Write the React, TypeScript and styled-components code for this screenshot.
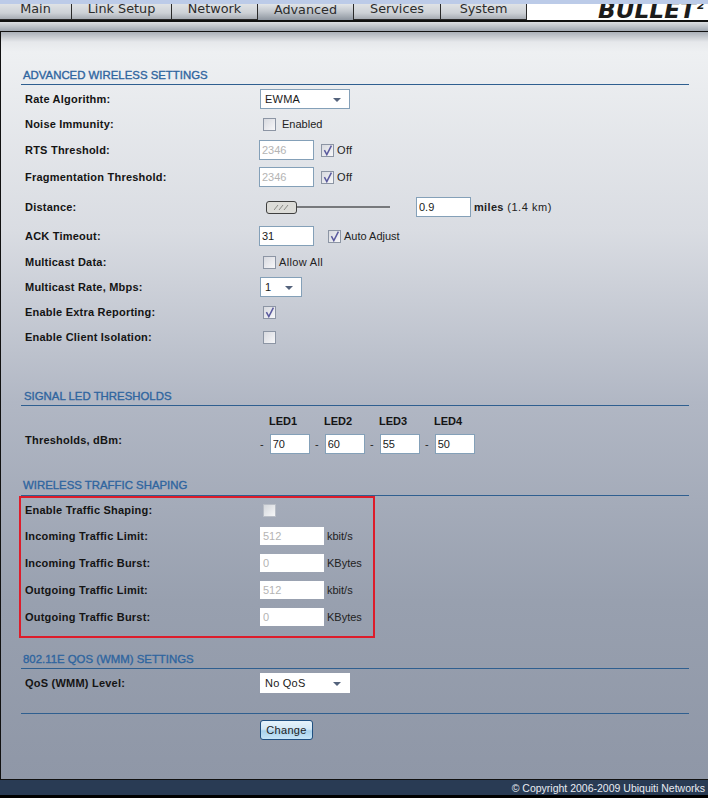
import React from "react";
import styled, { createGlobalStyle } from "styled-components";

const Global = createGlobalStyle`
  html, body { margin: 0; padding: 0; background: #000; }
  * { box-sizing: border-box; }
  body { font-family: "Liberation Sans", Arial, sans-serif; }
`;

const Page = styled.div`
  width: 708px;
  height: 798px;
  display: flex;
  flex-direction: column;
  overflow: hidden;
  background: #000;
`;
const TopStrip = styled.div`
  height: 4px;
  background: #bccbe8;
  flex: none;
`;
const TabBar = styled.div`
  height: 18px;
  flex: none;
  display: flex;
  background: #fff;
  border-bottom: 2px solid #111;
  overflow: hidden;
`;
const Tab = styled.div<{ $w: number; $active?: boolean }>`
  width: ${(p) => p.$w}px;
  height: 16px;
  flex: none;
  display: flex;
  justify-content: center;
  align-items: center;
  font-family: "DejaVu Sans", Verdana, sans-serif;
  font-size: 12.8px;
  line-height: 9px;
  padding-bottom: 6px;
  color: #2c2c2c;
  border-right: 1px solid #2a2a2a;
  border-bottom: ${(p) => (p.$active ? "none" : "1px solid #2a2a2a")};
  background: ${(p) =>
    p.$active
      ? "linear-gradient(#e2e5e8 0%, #c4c9cf 45%, #8e96a0 100%)"
      : "linear-gradient(#dfe2e5 0%, #cdd1d6 60%, #a7acb3 100%)"};
`;
const LogoArea = styled.div`
  flex: 1;
  position: relative;
  overflow: hidden;
`;
const LogoText = styled.span`
  position: absolute;
  left: 71px;
  top: -7px;
  font-family: "DejaVu Sans", sans-serif;
  font-weight: 700;
  font-style: italic;
  font-size: 23px;
  line-height: 26px;
  color: #1c1c1c;
  transform: scaleX(1.01);
  transform-origin: left top;
  white-space: nowrap;
  sup { font-size: 11px; line-height: 0; vertical-align: 9px; margin-left: 1px; }
`;
const Band = styled.div`
  height: 10px;
  flex: none;
  background: linear-gradient(#dde0e3, #9fa6b0);
  border-bottom: 1px solid #111;
`;
const Main = styled.main`
  height: 747px;
  flex: none;
  border-left: 1px solid #111;
  padding: 0 19px 0 20px;
  background: linear-gradient(
    #aab0b8 0px,
    #e6e8eb 10px,
    #eef0f2 20px,
    #d9dce2 200px,
    #b1b7c4 370px,
    #98a0af 570px,
    #8f97a7 747px
  );
`;
const Section = styled.section<{ $top: number }>`
  padding-top: ${(p) => p.$top}px;
`;
const Heading = styled.h2<{ $indent?: number; $h?: number }>`
  margin: 0;
  height: ${(p) => p.$h ?? 16}px;
  padding-left: ${(p) => p.$indent ?? 2}px;
  font-size: 11.4px;
  line-height: 14px;
  font-weight: 400;
  -webkit-text-stroke: 0.35px #2f659f;
  color: #2f659f;
`;
const Rule = styled.hr`
  margin: 0;
  border: 0;
  height: 1px;
  background: #2f5f90;
`;
const Row = styled.div<{ $h: number }>`
  height: ${(p) => p.$h}px;
  display: grid;
  grid-template-columns: 235px 1fr;
  align-items: center;
  padding-left: 4px;
`;
const Label = styled.label`
  font-size: 11px;
  font-weight: 700;
  color: #141414;
  letter-spacing: 0.02em;
`;
const LedLabel = styled(Label)`
  padding-bottom: 2px;
`;
const Controls = styled.div<{ $gap?: number; $left?: number }>`
  display: flex;
  align-items: center;
  gap: ${(p) => p.$gap ?? 7}px;
  margin-left: ${(p) => p.$left ?? 0}px;
`;
const Field = styled.input<{ $w: number; $h?: number; $plain?: boolean }>`
  width: ${(p) => p.$w}px;
  height: ${(p) => p.$h ?? 20}px;
  padding: 0 2px;
  margin: 0;
  border: 1px solid ${(p) => (p.$plain ? "#fff" : "#84a0b8")};
  border-radius: 0;
  outline: none;
  background: #fff;
  font: 11px "Liberation Sans", Arial, sans-serif;
  color: ${(p) => (p.disabled ? "#b4b4b4" : "#1a1a1a")};
  &:disabled { background: #fff; }
`;
const Select = styled.div<{ $w: number; $bare?: boolean }>`
  width: ${(p) => p.$w}px;
  height: 20px;
  padding: 0 8px 0 4px;
  display: flex;
  align-items: center;
  justify-content: space-between;
  background: #fff;
  border: 1px solid ${(p) => (p.$bare ? "#fff" : "#84a0b8")};
  font-size: 11px;
  color: #1a1a1a;
  letter-spacing: 0.02em;
`;
const Caret = styled.span`
  width: 0;
  height: 0;
  margin-top: 2px;
  border-left: 4px solid transparent;
  border-right: 4px solid transparent;
  border-top: 4px solid #54637c;
`;
const Box = styled.span<{ $faded?: boolean }>`
  width: 13px;
  height: 13px;
  flex: none;
  display: inline-block;
  border: 1px solid ${(p) => (p.$faded ? "#b9bec7" : "#8c95a4")};
  background: ${(p) =>
    p.$faded
      ? "linear-gradient(135deg,#d4d7dc,#f6f7f8)"
      : "linear-gradient(135deg,#d8dae0,#f7f7f9)"};
  svg { display: block; overflow: visible; }
`;
const OptionText = styled.span<{ $bold?: boolean; $wide?: boolean }>`
  font-size: 11px;
  color: #222;
  letter-spacing: ${(p) => (p.$wide ? "0.03em" : "0")};
  font-weight: ${(p) => (p.$bold ? 700 : 400)};
`;
const Muted = styled.span`
  font-weight: 400;
  letter-spacing: 0.05em;
`;
const Check = ({ on, faded }: { on?: boolean; faded?: boolean }) => (
  <Box $faded={faded}>
    {on && (
      <svg width="11" height="11" viewBox="0 0 11 11" aria-hidden="true">
        <path d="M2.4 5.2 L4.8 9.6 L9.4 0.6" fill="none" stroke="#5a5a9e" strokeWidth="1.5" />
      </svg>
    )}
  </Box>
);
const SliderWrap = styled.div`
  width: 124px;
  display: flex;
  align-items: center;
`;
const Thumb = styled.div`
  width: 31px;
  height: 13px;
  flex: none;
  border: 1px solid #3f3f3f;
  border-radius: 3px;
  background: #dcdcd8;
  display: flex;
  align-items: center;
  justify-content: center;
`;
const Track = styled.div`
  flex: 1;
  height: 3px;
  background: #77797c;
  border-bottom: 1px solid #dfe1e4;
`;
const LedGrid = styled.div`
  padding-left: 4px;
  display: grid;
  grid-template-columns: 235px repeat(4, 55px);
  grid-template-rows: 21px 28px;
  align-items: center;
`;
const LedHead = styled.div`
  font-size: 11px;
  font-weight: 700;
  color: #141414;
  padding: 8px 0 0 9px;
`;
const LedCell = styled.div`
  display: flex;
  align-items: center;
  gap: 6px;
  font-size: 11px;
  color: #222;
  padding-top: 6px;
`;
const RedBox = styled.div`
  width: 356px;
  height: 142px;
  margin-left: -2px;
  border: 2px solid #dd1c2a;
`;
const ChangeRow = styled.div`
  padding: 6px 0 0 239px;
`;
const ChangeButton = styled.button`
  width: 53px;
  height: 20px;
  padding: 0;
  border: 1px solid #1f4f80;
  border-radius: 3px;
  background: linear-gradient(#e6f2fa 0%, #d3e8f6 45%, #a9d2ec 55%, #c5e4f7 100%);
  font: 11px "Liberation Sans", Arial, sans-serif;
  letter-spacing: 0.03em;
  color: #1c1c1c;
`;
const Footer = styled.footer`
  height: 16px;
  flex: none;
  background: #293b54;
  border-top: 1px solid #111;
  display: flex;
  justify-content: flex-end;
  align-items: center;
  padding-right: 3px;
  font-size: 10.5px;
  color: #e8ecf2;
`;

const ThresholdOff = () => (
  <Controls $left={-1}>
    <Field $w={55} value="2346" disabled readOnly />
    <Controls $gap={3}>
      <Check on />
      <OptionText $wide>Off</OptionText>
    </Controls>
  </Controls>
);

const TrafficField = ({ value, unit }: { value: string; unit: string }) => (
  <Controls $gap={3}>
    <Field $w={64} $h={18} $plain value={value} disabled readOnly />
    <OptionText>{unit}</OptionText>
  </Controls>
);

export default function App() {
  return (
    <Page>
      <Global />
      <TopStrip />
      <TabBar>
        <Tab $w={72}>Main</Tab>
        <Tab $w={100}>Link Setup</Tab>
        <Tab $w={86}>Network</Tab>
        <Tab $w={96} $active>Advanced</Tab>
        <Tab $w={87}>Services</Tab>
        <Tab $w={86}>System</Tab>
        <LogoArea>
          <LogoText>BULLET<sup>2</sup></LogoText>
        </LogoArea>
      </TabBar>
      <Band />
      <Main>
        <Section $top={36}>
          <Heading>ADVANCED WIRELESS SETTINGS</Heading>
          <Rule />
          <Row $h={28}><Label>Rate Algorithm:</Label><Select $w={90}>EWMA<Caret /></Select></Row>
          <Row $h={22}><Label>Noise Immunity:</Label><Controls $left={3} $gap={6}><Check /><OptionText>Enabled</OptionText></Controls></Row>
          <Row $h={30}><Label>RTS Threshold:</Label><ThresholdOff /></Row>
          <Row $h={24}><Label>Fragmentation Threshold:</Label><ThresholdOff /></Row>
          <Row $h={36}>
            <Label>Distance:</Label>
            <Controls $left={6} $gap={26}>
              <SliderWrap>
                <Thumb>
                  <svg width="15" height="7" viewBox="0 0 15 7" aria-hidden="true">
                    <path d="M0 6 L4 1 M5 6 L9 1 M10 6 L14 1" fill="none" stroke="#8a8a86" strokeWidth="1" />
                  </svg>
                </Thumb>
                <Track />
              </SliderWrap>
              <Controls $gap={3}>
                <Field $w={55} value="0.9" readOnly />
                <OptionText $bold $wide>miles <Muted>(1.4 km)</Muted></OptionText>
              </Controls>
            </Controls>
          </Row>
          <Row $h={22}><Label>ACK Timeout:</Label><Controls $left={-1} $gap={14}><Field $w={55} value="31" readOnly /><Controls $gap={3}><Check on /><OptionText>Auto Adjust</OptionText></Controls></Controls></Row>
          <Row $h={30}><Label>Multicast Data:</Label><Controls $left={3} $gap={3}><Check /><OptionText $wide>Allow All</OptionText></Controls></Row>
          <Row $h={20}><Label>Multicast Rate, Mbps:</Label><Select $w={42}>1<Caret /></Select></Row>
          <Row $h={30}><Label>Enable Extra Reporting:</Label><Controls $left={3}><Check on /></Controls></Row>
          <Row $h={20}><Label>Enable Client Isolation:</Label><Controls $left={3}><Check /></Controls></Row>
        </Section>
        <Section $top={42}>
          <Heading $indent={3}>SIGNAL LED THRESHOLDS</Heading>
          <Rule />
          <LedGrid>
            <span />
            <LedHead>LED1</LedHead><LedHead>LED2</LedHead><LedHead>LED3</LedHead><LedHead>LED4</LedHead>
            <LedLabel>Thresholds, dBm:</LedLabel>
            <LedCell>-<Field $w={40} value="70" readOnly /></LedCell>
            <LedCell>-<Field $w={40} value="60" readOnly /></LedCell>
            <LedCell>-<Field $w={40} value="55" readOnly /></LedCell>
            <LedCell>-<Field $w={40} value="50" readOnly /></LedCell>
          </LedGrid>
        </Section>
        <Section $top={23}>
          <Heading $h={17}>WIRELESS TRAFFIC SHAPING</Heading>
          <Rule />
          <RedBox>
            <Row $h={24}><Label>Enable Traffic Shaping:</Label><Controls $left={3}><Check faded /></Controls></Row>
            <Row $h={27}><Label>Incoming Traffic Limit:</Label><TrafficField value="512" unit="kbit/s" /></Row>
            <Row $h={27}><Label>Incoming Traffic Burst:</Label><TrafficField value="0" unit="KBytes" /></Row>
            <Row $h={27}><Label>Outgoing Traffic Limit:</Label><TrafficField value="512" unit="kbit/s" /></Row>
            <Row $h={27}><Label>Outgoing Traffic Burst:</Label><TrafficField value="0" unit="KBytes" /></Row>
          </RedBox>
        </Section>
        <Section $top={14}>
          <Heading>802.11E QOS (WMM) SETTINGS</Heading>
          <Rule />
          <Row $h={28}><Label>QoS (WMM) Level:</Label><Select $w={90} $bare>No QoS<Caret /></Select></Row>
        </Section>
        <Section $top={16}>
          <Rule />
          <ChangeRow><ChangeButton type="button">Change</ChangeButton></ChangeRow>
        </Section>
      </Main>
      <Footer>© Copyright 2006-2009 Ubiquiti Networks</Footer>
    </Page>
  );
}
